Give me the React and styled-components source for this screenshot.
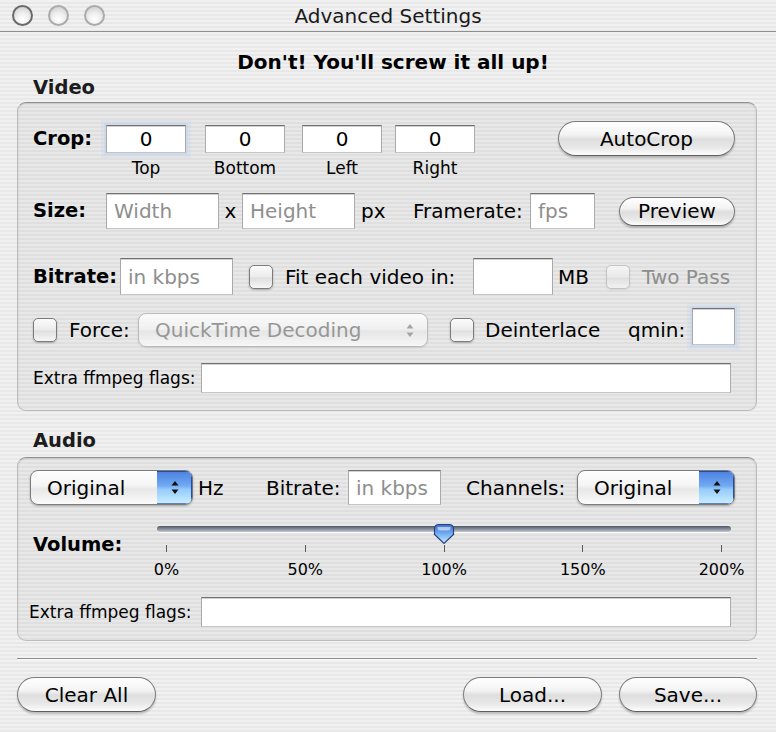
import React from "react";
import styled, { createGlobalStyle } from "styled-components";

const FONT = `"DejaVu Sans", "Lucida Grande", Verdana, sans-serif`;

const GlobalStyle = createGlobalStyle`
  html, body {
    margin: 0;
    padding: 0;
  }
  body {
    font-family: ${FONT};
  }
`;

const Window = styled.div`
  width: 776px;
  height: 732px;
  display: flex;
  flex-direction: column;
  overflow: hidden;
  font-family: ${FONT};
  font-size: 20px;
  color: #000;
  background: repeating-linear-gradient(
    to bottom,
    #f1f1f1 0px,
    #f1f1f1 2px,
    #e8e8e8 2px,
    #e8e8e8 4px
  );
`;

const TitleBar = styled.div`
  flex: none;
  height: 31px;
  border-bottom: 1px solid #8e8e8e;
  display: grid;
  grid-template-columns: 1fr auto 1fr;
  align-items: center;
`;

const Lights = styled.div`
  display: flex;
  gap: 15px;
  padding-left: 12px;
`;

const Light = styled.span`
  box-sizing: border-box;
  width: 21px;
  height: 21px;
  border-radius: 50%;
  border: 2px solid ${(p) => (p.$active ? "#6a6a6a" : "#ababab")};
  background: radial-gradient(
    circle at 50% 72%,
    #ffffff 0%,
    #f0f0f0 40%,
    #c8c8c8 100%
  );
`;

const Title = styled.div`
  font-size: 20px;
  color: #1a1a1a;
`;

const Content = styled.div`
  flex: 1;
  display: flex;
  flex-direction: column;
  padding: 0 19px 0 17px;
`;

const Warning = styled.div`
  margin-top: 18px;
  padding-left: 12px;
  line-height: 24px;
  font-weight: bold;
  text-align: center;
`;

const SectionTitle = styled.div`
  margin-top: ${(p) => p.$mt}px;
  padding-left: 16px;
  line-height: 24px;
  font-size: 19.5px;
  font-weight: bold;
  color: #1c1c1c;
`;

const Group = styled.div`
  margin-top: ${(p) => p.$mt}px;
  box-sizing: border-box;
  width: 740px;
  display: flex;
  flex-direction: column;
  padding: ${(p) => p.$pt}px 21px ${(p) => p.$pb}px 15px;
  border: 1px solid #bcbcbc;
  border-top-color: #8f8f8f;
  border-radius: 9px;
  background: rgba(0, 0, 0, 0.035);
  box-shadow: inset 0 1px 2px rgba(0, 0, 0, 0.12);
`;

const Row = styled.div`
  display: flex;
  align-items: ${(p) => p.$align || "center"};
  height: ${(p) => (p.$h ? `${p.$h}px` : "auto")};
  margin-top: ${(p) => p.$mt || 0}px;
`;

const Label = styled.span`
  flex: none;
  box-sizing: border-box;
  width: ${(p) => (p.$w ? `${p.$w}px` : "auto")};
  margin-left: ${(p) => p.$ml || 0}px;
  margin-top: ${(p) => p.$mt || 0}px;
  padding-left: ${(p) => p.$pl || 0}px;
  line-height: ${(p) => p.$lh || 24}px;
  font-size: ${(p) => p.$size || (p.$bold ? 19.5 : 20)}px;
  font-weight: ${(p) => (p.$bold ? "bold" : "normal")};
  color: ${(p) => (p.$dim ? "#8e8e8e" : "#000")};
  text-align: ${(p) => p.$align || "left"};
  white-space: nowrap;
`;

const TextField = styled.input`
  flex: none;
  box-sizing: border-box;
  width: ${(p) => p.$w}px;
  height: ${(p) => p.$h}px;
  margin: ${(p) => p.$mt || 0}px 0 0 ${(p) => p.$ml || 0}px;
  align-self: ${(p) => (p.$mt ? "flex-start" : "auto")};
  padding: 0 7px;
  border: 1px solid;
  border-color: #707070 #a9a9a9 #c6c6c6 #a9a9a9;
  border-radius: 0;
  background: #fff;
  box-shadow: inset 0 1px 0 #d2d2d2
    ${(p) =>
      p.$focus
        ? ", 0 0 0 2px rgba(196, 214, 236, 0.55), 0 0 0 5px rgba(196, 214, 236, 0.3)"
        : ""};
  font-family: ${FONT};
  font-size: 20px;
  color: #000;
  text-align: ${(p) => (p.$center ? "center" : "left")};
  outline: none;

  &::placeholder {
    color: #8e8e8e;
  }
`;

const CropCell = styled.div`
  flex: none;
  display: flex;
  flex-direction: column;
  align-items: center;
  margin-left: ${(p) => p.$ml || 0}px;
`;

const Caption = styled.span`
  margin-top: 5px;
  line-height: 20px;
  font-size: 17px;
`;

const PushButton = styled.button`
  flex: none;
  box-sizing: border-box;
  width: ${(p) => p.$w}px;
  height: ${(p) => p.$h || 35}px;
  margin-left: ${(p) => (p.$ml === "auto" ? "auto" : `${p.$ml || 0}px`)};
  margin-top: ${(p) => p.$mt || 0}px;
  padding: 0;
  border: 1px solid #7a7a7a;
  border-bottom-color: #5e5e5e;
  border-radius: 18px;
  background: linear-gradient(
    to bottom,
    #ffffff 0%,
    #f3f3f3 38%,
    #dedede 52%,
    #e8e8e8 78%,
    #fdfdfd 100%
  );
  box-shadow: 0 2px 2px rgba(0, 0, 0, 0.22), inset 0 1px 1px #ffffff;
  font-family: ${FONT};
  font-size: 20px;
  color: #000;
`;

const Check = styled.span`
  flex: none;
  box-sizing: border-box;
  width: 24px;
  height: 24px;
  margin-left: ${(p) => p.$ml || 0}px;
  border-radius: 5px;
  border: 1px solid ${(p) => (p.$disabled ? "#b8b8b8" : "#7c7c7c")};
  background: linear-gradient(
    to bottom,
    #fbfbfb 0%,
    #ececec 48%,
    #dfdfdf 55%,
    #f7f7f7 100%
  );
  box-shadow: 0 1px 2px rgba(0, 0, 0, ${(p) => (p.$disabled ? 0.1 : 0.28)});
  opacity: ${(p) => (p.$disabled ? 0.75 : 1)};
`;

const Popup = styled.div`
  flex: none;
  box-sizing: border-box;
  display: flex;
  width: ${(p) => p.$w}px;
  height: ${(p) => p.$h}px;
  margin-left: ${(p) => p.$ml || 0}px;
  border: 1px solid ${(p) => (p.$disabled ? "#b4b4b4" : "#7c7c7c")};
  border-radius: 8px;
  overflow: hidden;
  background: linear-gradient(
    to bottom,
    #ffffff 0%,
    #f4f4f4 45%,
    #e7e7e7 55%,
    #fbfbfb 100%
  );
  box-shadow: 0 1px 2px rgba(0, 0, 0, ${(p) => (p.$disabled ? 0.12 : 0.3)});
  opacity: ${(p) => (p.$disabled ? 0.85 : 1)};
`;

const PopupText = styled.span`
  flex: 1;
  display: flex;
  align-items: center;
  padding-left: 16px;
  color: ${(p) => (p.$disabled ? "#8a8a8a" : "#000")};
  white-space: nowrap;
`;

const PopupArrows = styled.span`
  flex: none;
  width: 35px;
  display: flex;
  align-items: center;
  justify-content: center;
  background: ${(p) =>
    p.$blue
      ? "linear-gradient(to bottom, #4a80e0 0%, #72aaf2 45%, #93cbfc 55%, #cdeeff 100%)"
      : "transparent"};
  box-shadow: ${(p) =>
    p.$blue
      ? "inset -1px 0 0 #2b4c9e, inset 0 1px 0 #2b4c9e, inset 0 -1px 0 #5a7fc8"
      : "none"};
`;

const Slider = styled.div`
  flex: none;
  width: 574px;
  display: flex;
  flex-direction: column;
`;

const TrackArea = styled.div`
  position: relative;
  height: 16px;
`;

const Track = styled.div`
  margin-top: 5px;
  height: 6px;
  border-radius: 3px;
  background: linear-gradient(to bottom, #4d5465 0%, #8b919d 55%, #c6cad1 100%);
  box-shadow: 0 1px 0 rgba(255, 255, 255, 0.8);
`;

const Knob = styled.svg`
  position: absolute;
  top: 2px;
  width: 22px;
  height: 22px;
  margin-left: -11px;
`;

const Ticks = styled.div`
  display: flex;
  justify-content: space-between;
  padding: 0 9px;
  margin-top: 8px;
`;

const Tick = styled.span`
  width: 1px;
  height: 7px;
  background: #5c5c5c;
`;

const TickLabels = styled.div`
  display: flex;
  justify-content: space-between;
  padding: 0 9px;
  margin-top: 9px;
`;

const TickLabel = styled.span`
  width: 1px;
  display: flex;
  justify-content: center;
  font-size: 16px;
  line-height: 18px;
  white-space: nowrap;
`;

const Separator = styled.div`
  margin-top: 17px;
  width: 740px;
  height: 1px;
  background: #8c8c8c;
  box-shadow: 0 1px 0 #fafafa;
`;

function Arrows({ color }) {
  return (
    <svg width="8" height="15" viewBox="0 0 8 15">
      <path d="M4 1 L7.5 5.5 L0.5 5.5 Z" fill={color} />
      <path d="M4 14 L7.5 9.5 L0.5 9.5 Z" fill={color} />
    </svg>
  );
}

const ticks = ["0%", "50%", "100%", "150%", "200%"];

function App() {
  const volume = 100;
  const knobLeft = 9 + (556 * volume) / 200;

  return (
    <>
      <GlobalStyle />
      <Window>
        <TitleBar>
          <Lights>
            <Light $active />
            <Light />
            <Light />
          </Lights>
          <Title>Advanced Settings</Title>
          <div />
        </TitleBar>

        <Content>
          <Warning>Don't! You'll screw it all up!</Warning>

          <SectionTitle $mt={2}>Video</SectionTitle>
          <Group $mt={2} $pt={22} $pb={17}>
            <Row $align="flex-start">
              <Label $bold $w={73} $lh={28}>
                Crop:
              </Label>
              <CropCell>
                <TextField $w={80} $h={28} $center $focus defaultValue="0" />
                <Caption>Top</Caption>
              </CropCell>
              <CropCell $ml={19}>
                <TextField $w={80} $h={28} $center defaultValue="0" />
                <Caption>Bottom</Caption>
              </CropCell>
              <CropCell $ml={17}>
                <TextField $w={80} $h={28} $center defaultValue="0" />
                <Caption>Left</Caption>
              </CropCell>
              <CropCell $ml={13}>
                <TextField $w={80} $h={28} $center defaultValue="0" />
                <Caption>Right</Caption>
              </CropCell>
              <PushButton $w={177} $ml="auto" $mt={-4}>
                AutoCrop
              </PushButton>
            </Row>

            <Row $h={36} $mt={15}>
              <Label $bold $w={73}>
                Size:
              </Label>
              <TextField $w={113} $h={36} placeholder="Width" />
              <Label $w={23} $align="center">
                x
              </Label>
              <TextField $w={113} $h={36} placeholder="Height" />
              <Label $w={58} $pl={6}>
                px
              </Label>
              <Label $w={117}>Framerate:</Label>
              <TextField $w={65} $h={36} placeholder="fps" />
              <PushButton $w={116} $h={29} $ml="auto">
                Preview
              </PushButton>
            </Row>

            <Row $h={37} $mt={29}>
              <Label $bold $w={87}>
                Bitrate:
              </Label>
              <TextField $w={113} $h={37} placeholder="in kbps" />
              <Check $ml={16} />
              <Label $ml={12} $w={188}>
                Fit each video in:
              </Label>
              <TextField $w={80} $h={37} />
              <Label $ml={5} $w={48}>
                MB
              </Label>
              <Check $disabled />
              <Label $ml={12} $dim>
                Two Pass
              </Label>
            </Row>

            <Row $h={34} $mt={18}>
              <Check />
              <Label $ml={12} $w={69}>
                Force:
              </Label>
              <Popup $w={290} $h={34} $disabled>
                <PopupText $disabled>QuickTime Decoding</PopupText>
                <PopupArrows>
                  <Arrows color="#9a9a9a" />
                </PopupArrows>
              </Popup>
              <Check $ml={22} />
              <Label $ml={11} $w={143}>
                Deinterlace
              </Label>
              <Label $w={64}>qmin:</Label>
              <TextField $w={43} $h={37} $mt={-5} $focus />
            </Row>

            <Row $h={30} $mt={16}>
              <Label $w={168} $size={17}>
                Extra ffmpeg flags:
              </Label>
              <TextField $w={530} $h={30} />
            </Row>
          </Group>

          <SectionTitle $mt={18}>Audio</SectionTitle>
          <Group $mt={4} $pt={12} $pb={13}>
            <Row $h={35}>
              <Popup $w={163} $h={35} $ml={-3}>
                <PopupText>Original</PopupText>
                <PopupArrows $blue>
                  <Arrows color="#111" />
                </PopupArrows>
              </Popup>
              <Label $ml={5} $w={68}>
                Hz
              </Label>
              <Label $w={82}>Bitrate:</Label>
              <TextField $w={93} $h={35} placeholder="in kbps" />
              <Label $ml={25} $w={111}>
                Channels:
              </Label>
              <Popup $w={158} $h={35}>
                <PopupText>Original</PopupText>
                <PopupArrows $blue>
                  <Arrows color="#111" />
                </PopupArrows>
              </Popup>
            </Row>

            <Row $align="flex-start" $mt={16}>
              <Label $bold $w={124} $mt={12}>
                Volume:
              </Label>
              <Slider>
                <TrackArea>
                  <Track />
                  <Knob viewBox="0 0 22 22" style={{ left: knobLeft }}>
                    <defs>
                      <linearGradient id="knobFill" x1="0" y1="0" x2="0" y2="1">
                        <stop offset="0" stopColor="#3b70d4" />
                        <stop offset="0.45" stopColor="#6ea8f0" />
                        <stop offset="1" stopColor="#c8edff" />
                      </linearGradient>
                    </defs>
                    <path
                      d="M1.5 6 Q1.5 1.5 6 1.5 L16 1.5 Q20.5 1.5 20.5 6 L20.5 11.5 L11 20.5 L1.5 11.5 Z"
                      fill="url(#knobFill)"
                      stroke="#29407c"
                      strokeWidth="1.2"
                    />
                    <path
                      d="M4.5 4 L17.5 4 Q17.5 7.5 15 7.5 L7 7.5 Q4.5 7.5 4.5 4 Z"
                      fill="#ffffff"
                      opacity="0.55"
                    />
                  </Knob>
                </TrackArea>
                <Ticks>
                  {ticks.map((t) => (
                    <Tick key={t} />
                  ))}
                </Ticks>
                <TickLabels>
                  {ticks.map((t) => (
                    <TickLabel key={t}>{t}</TickLabel>
                  ))}
                </TickLabels>
              </Slider>
            </Row>

            <Row $h={30} $mt={18}>
              <Label $ml={-4} $w={172} $size={17}>
                Extra ffmpeg flags:
              </Label>
              <TextField $w={530} $h={30} />
            </Row>
          </Group>

          <Separator />

          <Row $h={35} $mt={18}>
            <PushButton $w={139}>Clear All</PushButton>
            <PushButton $w={139} $ml="auto">
              Load...
            </PushButton>
            <PushButton $w={138} $ml={17}>
              Save...
            </PushButton>
          </Row>
        </Content>
      </Window>
    </>
  );
}

export default App;
